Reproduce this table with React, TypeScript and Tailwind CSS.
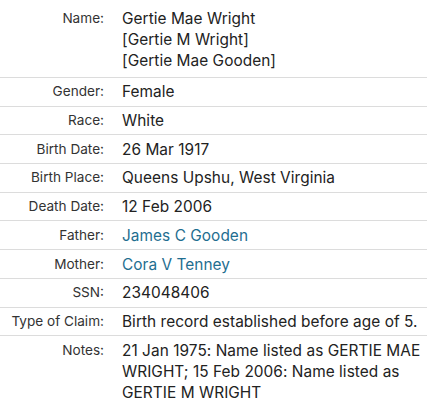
const ROWS: { label: string; value: string[]; link?: boolean }[] = [
  { label: 'Name:', value: ['Gertie Mae Wright', '[Gertie M Wright]', '[Gertie Mae Gooden]'] },
  { label: 'Gender:', value: ['Female'] },
  { label: 'Race:', value: ['White'] },
  { label: 'Birth Date:', value: ['26 Mar 1917'] },
  { label: 'Birth Place:', value: ['Queens Upshu, West Virginia'] },
  { label: 'Death Date:', value: ['12 Feb 2006'] },
  { label: 'Father:', value: ['James C Gooden'], link: true },
  { label: 'Mother:', value: ['Cora V Tenney'], link: true },
  { label: 'SSN:', value: ['234048406'] },
  { label: 'Type of Claim:', value: ['Birth record established before age of 5.'] },
  {
    label: 'Notes:',
    value: ['21 Jan 1975: Name listed as GERTIE MAE WRIGHT; 15 Feb 2006: Name listed as GERTIE M WRIGHT'],
  },
]

export default function App() {
  return (
    <div className="w-[427px] h-[408px] overflow-hidden bg-white" style={{ fontFamily: 'Inter, "Noto Sans", sans-serif' }}>
      <table className="w-full border-collapse table-fixed">
        <tbody>
          {ROWS.map((r, i) => (
            <tr key={r.label} className={i < ROWS.length - 1 ? 'border-b border-[#dcdcdc]' : ''}>
              <th
                className={`w-[112px] pr-[8px] align-top text-right font-normal text-[13.6px] leading-[21px] text-[#333] ${
                  i === 0 ? 'pt-[7.5px] pb-[6.5px]' : 'pt-[3.4px] pb-[3.3px]'
                }`}
              >
                {r.label}
              </th>
              <td
                className={`pl-[10px] pr-[2px] align-top text-[15.4px] tracking-[0.05px] leading-[21px] ${
                  r.link ? 'text-[#1f6e90]' : 'text-[#222]'
                } ${i === 0 ? 'pt-[7.5px] pb-[6.5px]' : 'pt-[3.4px] pb-[3.3px]'}`}
              >
                {r.value.map((v) => (
                  <div key={v}>{v}</div>
                ))}
              </td>
            </tr>
          ))}
        </tbody>
      </table>
    </div>
  )
}
